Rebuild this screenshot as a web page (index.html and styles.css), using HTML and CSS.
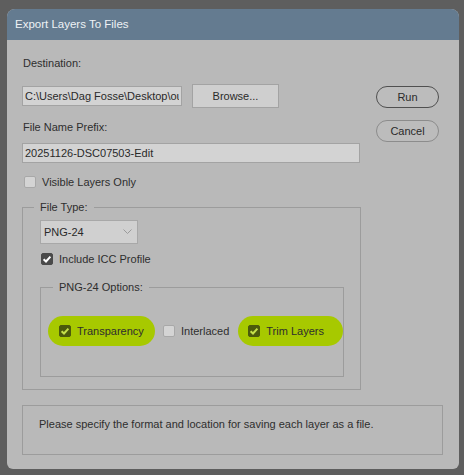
FILE: index.html
```html
<!DOCTYPE html>
<html>

<head>
	<title>Export Layers To Files</title>
	<link rel="stylesheet" href="styles.css">
</head>

<body>

	<div class="dialog">
		<div class="titlebar">Export Layers To Files</div>

		<div class="content">
			<div class="main">

				<div class="leftcolumn">
					<div class="label">Destination:</div>
					<div class="pathrow">
						<input type="text" class="text_menu path_menu" value="C:\Users\Dag Fosse\Desktop\output" />
						<button class="button_menu">Browse...</button>
					</div>

					<div class="label prefix_label">File Name Prefix:</div>
					<input type="text" class="text_menu prefix_menu" value="20251126-DSC07503-Edit" />

					<label class="check visible_check">
						<span class="box"></span>
						<span>Visible Layers Only</span>
					</label>

					<fieldset class="group filetype">
						<legend>File Type:</legend>

						<div class="select_menu">
							<span>PNG-24</span>
							<svg width="9" height="6" viewBox="0 0 9 6">
								<polyline points="0.5,0.5 4.5,4.5 8.5,0.5" fill="none" stroke="#9a9a9a" stroke-width="1" />
							</svg>
						</div>

						<label class="check icc_check">
							<span class="box checked">
								<svg width="12" height="12" viewBox="0 0 12 12">
									<polyline points="2.6,6.2 5,8.5 9.4,3.6" fill="none" stroke="#ffffff" stroke-width="2" />
								</svg>
							</span>
							<span>Include ICC Profile</span>
						</label>

						<fieldset class="group options">
							<legend>PNG-24 Options:</legend>

							<div class="optionrow">
								<label class="check pill pill_transparency">
									<span class="box lime">
										<svg width="12" height="12" viewBox="0 0 12 12">
											<polyline points="2.6,6.2 5,8.5 9.4,3.6" fill="none" stroke="#c4e04a" stroke-width="2" />
										</svg>
									</span>
									<span>Transparency</span>
								</label>

								<label class="check plain">
									<span class="box"></span>
									<span>Interlaced</span>
								</label>

								<label class="check pill pill_trim">
									<span class="box lime">
										<svg width="12" height="12" viewBox="0 0 12 12">
											<polyline points="2.6,6.2 5,8.5 9.4,3.6" fill="none" stroke="#c4e04a" stroke-width="2" />
										</svg>
									</span>
									<span>Trim Layers</span>
								</label>
							</div>
						</fieldset>
					</fieldset>
				</div>

				<div class="rightcolumn">
					<button class="round_button run">Run</button>
					<button class="round_button cancel">Cancel</button>
				</div>

			</div>

			<div class="infobox">Please specify the format and location for saving each layer as a file.</div>
		</div>
	</div>

</body>

</html>
```

FILE: styles.css
```css
body {
	margin: 0;
	background-color: #5e5e5e;
	font-family: "Liberation Sans", Arial, sans-serif;
	font-size: 11px;
	color: #2e2e2e;
}

.dialog {
	margin: 9px 5px 6px 7px;
	height: 460px;
	background-color: #b9b9b9;
	border-radius: 8px 8px 6px 6px;
	overflow: hidden;
	box-sizing: border-box;
}

.titlebar {
	height: 31px;
	line-height: 31px;
	padding-left: 8px;
	background-color: #647b90;
	color: #eef2f5;
	font-size: 11.5px;
}

.content {
	padding: 16px 16px 0 15px;
}

.main {
	display: flex;
}

.leftcolumn {
	width: 338px;
	display: flex;
	flex-direction: column;
}

.rightcolumn {
	display: flex;
	flex-direction: column;
	gap: 12px;
	padding-left: 16px;
	padding-top: 30px;
}

.label {
	line-height: 14px;
	padding-left: 1px;
}

.pathrow {
	display: flex;
	align-items: center;
	gap: 10px;
	margin-top: 14px;
}

.text_menu {
	box-sizing: border-box;
	height: 20px;
	padding: 0 2px;
	background-color: #d3d3d3;
	border: 1px solid #a3a3a3;
	border-radius: 0;
	font: inherit;
	color: #2a2a2a;
	outline: none;
}

.path_menu {
	width: 160px;
}

.button_menu {
	box-sizing: border-box;
	width: 87px;
	height: 24px;
	background-color: #cfcfcf;
	border: 1px solid #a3a3a3;
	border-radius: 0;
	font: inherit;
	color: #2a2a2a;
	padding: 0;
}

.prefix_label {
	margin-top: 12px;
}

.prefix_menu {
	width: 338px;
	margin-top: 9px;
}

.check {
	display: flex;
	align-items: center;
	gap: 6px;
	line-height: 14px;
}

.box {
	box-sizing: border-box;
	width: 12px;
	height: 12px;
	background-color: #d4d4d4;
	border: 1px solid #a8a8a8;
	border-radius: 2px;
	display: flex;
}

.box svg {
	margin: -1px;
}

.box.checked {
	background-color: #4a4a4a;
	border-color: #4a4a4a;
}

.box.lime {
	background-color: #4b5a0c;
	border-color: #4b5a0c;
}

.visible_check {
	margin-top: 12px;
	padding-left: 2px;
}

.group {
	margin: 0;
	border: 1px solid #9c9c9c;
}

.group legend {
	padding: 0 6px;
	line-height: 14px;
}

.filetype {
	margin-top: 11px;
	padding: 6px 16px 12px 17px;
}

.filetype legend {
	margin-left: -6px;
}

.select_menu {
	box-sizing: border-box;
	width: 98px;
	height: 24px;
	display: flex;
	align-items: center;
	justify-content: space-between;
	padding: 0 5px 0 3px;
	background-color: #d0d0d0;
	border: 1px solid #a8a8a8;
	color: #2a2a2a;
}

.icc_check {
	margin-top: 8px;
	padding-left: 1px;
}

.options {
	margin-top: 14px;
	padding: 22px 0 30px 7px;
}

.options legend {
	margin-left: 5px;
}

.optionrow {
	display: flex;
	align-items: center;
}

.pill {
	height: 30px;
	border-radius: 15px;
	background-color: #a7c900;
	box-sizing: border-box;
	padding-left: 11px;
}

.pill_transparency {
	width: 107px;
}

.pill_trim {
	width: 105px;
	padding-left: 10px;
}

.plain {
	margin: 0 9px 0 8px;
}

.round_button {
	box-sizing: border-box;
	width: 63px;
	height: 22px;
	background-color: #bcbcbc;
	border: 1px solid #505050;
	border-radius: 11px;
	font: inherit;
	color: #2a2a2a;
	padding: 0;
}

.round_button.cancel {
	border-color: #8c8c8c;
}

.infobox {
	box-sizing: border-box;
	height: 50px;
	margin-top: 15px;
	padding: 11px 16px;
	border: 1px solid #9c9c9c;
	line-height: 14px;
}
```
